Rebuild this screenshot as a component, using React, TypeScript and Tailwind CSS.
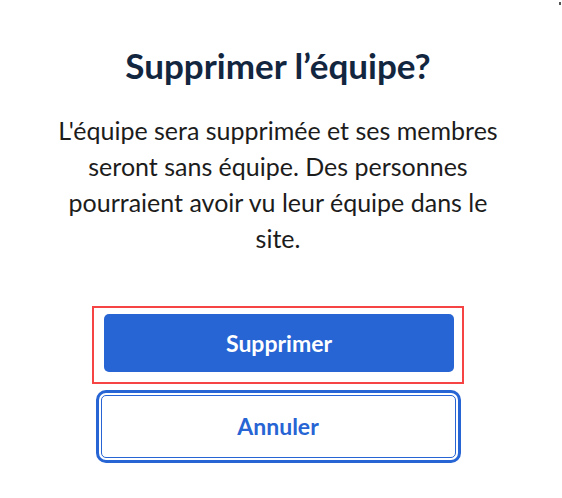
import React from 'react';

const App: React.FC = () => {
  return (
    <div className="relative min-h-screen bg-white font-['Lato',sans-serif]">
      <div className="absolute right-[1px] top-[2px] h-[3px] w-[2px] bg-[#555]" />
      <div className="flex flex-col items-center pr-[6px] pt-[43px]">
        <h2 className="text-[35px] font-bold leading-[44px] text-[#13263f]">Supprimer l’équipe?</h2>
        <p className="mt-[25px] text-center text-[25px] leading-[36px] text-[#1c1c1c]">
          L'équipe sera supprimée et ses membres
          <br />
          seront sans équipe. Des personnes
          <br />
          pourraient avoir vu leur équipe dans le
          <br />
          site.
        </p>
        <div className="mt-[50px] w-[372px] border-2 border-[#f64444] pb-[10px] pl-[10px] pr-[8px] pt-[6px]">
          <button className="h-[58px] w-full rounded-[5px] bg-[#2764d4] text-[23px] font-bold text-white">
            Supprimer
          </button>
        </div>
        <button className="mt-[11px] h-[63px] w-[355px] rounded-[5px] border border-[#2764d4] bg-white text-[23px] font-bold text-[#2764d4] outline-[3px] outline-offset-2 outline-[#2764d4] outline-solid">
          Annuler
        </button>
      </div>
    </div>
  );
};

export default App;
